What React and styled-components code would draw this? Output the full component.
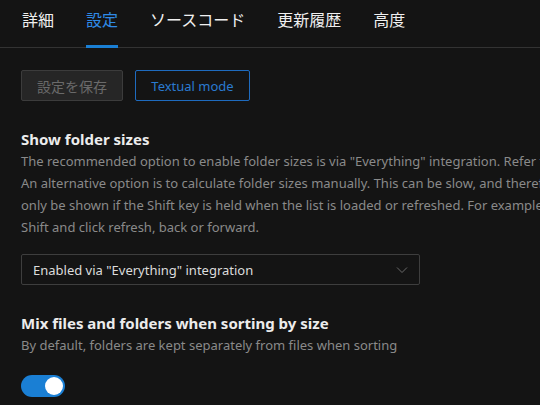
import styled, { createGlobalStyle } from "styled-components";

const GlobalStyle = createGlobalStyle`
  html, body {
    margin: 0;
    padding: 0;
    background: #141414;
    overflow: hidden;
  }
  body {
    font-family: "Noto Sans", "Noto Sans CJK JP", sans-serif;
  }
`;

const Page = styled.div`
  width: 540px;
  height: 405px;
  background: #141414;
  color: #e8e8e8;
  overflow: hidden;
`;

const TabBar = styled.div`
  display: flex;
  align-items: flex-start;
  height: 48px;
  border-bottom: 1px solid #333333;
  padding-left: 22px;
  gap: 32px;
  box-sizing: border-box;
`;

const Tab = styled.div`
  font-family: "Noto Sans CJK JP", sans-serif;
  font-size: 16px;
  line-height: 22px;
  height: 48px;
  padding-top: 8px;
  box-sizing: border-box;
  white-space: nowrap;
  color: ${(p) => (p.$active ? "#2f8ae6" : "#f0f0f0")};
  border-bottom: 3px solid ${(p) => (p.$active ? "#1a7fd4" : "transparent")};
`;

const Content = styled.div`
  padding: 22px 0 0 21px;
`;

const ButtonRow = styled.div`
  display: flex;
  gap: 12px;
  margin-bottom: 27px;
`;

const Button = styled.button`
  height: 31px;
  padding: 0;
  border-radius: 2px;
  font-size: ${(p) => (p.$disabled ? 14 : 13)}px;
  font-family: ${(p) =>
    p.$disabled ? '"Noto Sans CJK JP", sans-serif' : '"Noto Sans", sans-serif'};
  background: ${(p) => (p.$disabled ? "#262626" : "transparent")};
  border: 1px solid ${(p) => (p.$disabled ? "#3c3c3c" : "#1e6bbf")};
  color: ${(p) => (p.$disabled ? "#6a6a6a" : "#2a7ad0")};
  width: ${(p) => p.$w}px;
`;

const Section = styled.div`
  margin-bottom: ${(p) => p.$mb || 0}px;
`;

const Heading = styled.div`
  font-size: 15px;
  font-weight: 700;
  color: #ececec;
  line-height: 22px;
`;

const Desc = styled.div`
  font-size: 13px;
  line-height: 22px;
  color: #8a8a8a;
  white-space: nowrap;
`;

const Select = styled.div`
  margin-top: 16px;
  width: 399px;
  height: 31px;
  border: 1px solid #3e3e3e;
  border-radius: 2px;
  box-sizing: border-box;
  display: flex;
  align-items: center;
  justify-content: space-between;
  padding: 0 11px;
  font-size: 13px;
  color: #dcdcdc;
`;

const Toggle = styled.div`
  margin-top: 19px;
  width: 44px;
  height: 22px;
  border-radius: 11px;
  background: #1a7fd4;
  display: flex;
  align-items: center;
  justify-content: ${(p) => (p.$on ? "flex-end" : "flex-start")};
  padding: 0 2px;
  box-sizing: border-box;
`;

const Knob = styled.div`
  width: 18px;
  height: 18px;
  border-radius: 50%;
  background: #ffffff;
`;

const Chevron = () => (
  <svg width="12" height="8" viewBox="0 0 12 8">
    <path d="M1 1.5 L6 6.5 L11 1.5" fill="none" stroke="#6a6a6a" strokeWidth="1" />
  </svg>
);

export default function App() {
  const tabs = ["詳細", "設定", "ソースコード", "更新履歴", "高度"];
  return (
    <Page>
      <GlobalStyle />
      <TabBar>
        {tabs.map((t) => (
          <Tab key={t} $active={t === "設定"}>
            {t}
          </Tab>
        ))}
      </TabBar>
      <Content>
        <ButtonRow>
          <Button $disabled $w={102}>設定を保存</Button>
          <Button $w={115}>Textual mode</Button>
        </ButtonRow>
        <Section $mb={27}>
          <Heading>Show folder sizes</Heading>
          <Desc>
            The recommended option to enable folder sizes is via "Everything" integration. Refer to the documentation.
          </Desc>
          <Desc>
            An alternative option is to calculate folder sizes manually. This can be slow, and therefore sizes will
          </Desc>
          <Desc>
            only be shown if the Shift key is held when the list is loaded or refreshed. For example, hold down
          </Desc>
          <Desc>Shift and click refresh, back or forward.</Desc>
          <Select>
            <span>Enabled via "Everything" integration</span>
            <Chevron />
          </Select>
        </Section>
        <Section>
          <Heading>Mix files and folders when sorting by size</Heading>
          <Desc>By default, folders are kept separately from files when sorting</Desc>
          <Toggle $on>
            <Knob />
          </Toggle>
        </Section>
      </Content>
    </Page>
  );
}
